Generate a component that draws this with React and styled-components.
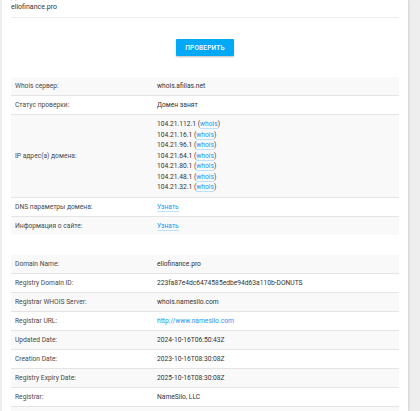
import React from "react";
import styled, { createGlobalStyle } from "styled-components";

const GlobalStyle = createGlobalStyle`
  html, body {
    margin: 0;
    padding: 0;
    background: #eeeeee;
    font-family: Roboto, "Noto Sans", Arial, sans-serif;
    overflow: hidden;
  }
`;

const Page = styled.div`
  width: 420px;
  height: 411px;
  display: flex;
  padding-left: 2px;
  box-sizing: border-box;
`;

const Card = styled.main`
  width: 406px;
  background: #fff;
  padding: 0 9px;
  box-sizing: border-box;
  box-shadow: 1px 0 2px rgba(0, 0, 0, 0.12);
`;

const FieldLabel = styled.div`
  font-size: 7px;
  line-height: 9px;
  color: #9e9e9e;
  margin-top: -7px;
`;

const DomainField = styled.div`
  font-size: 7px;
  line-height: 9px;
  color: #333;
  padding: 1px 0 5px;
  border-bottom: 1px solid #ececec;
`;

const ButtonRow = styled.div`
  display: flex;
  justify-content: center;
  padding: 21px 0 21px;
`;

const CheckButton = styled.button`
  width: 58px;
  height: 17px;
  border: 0;
  border-radius: 1px;
  background: #03a9f4;
  color: #fff;
  font-family: Roboto, Arial, sans-serif;
  font-size: 6.5px;
  font-weight: 500;
  letter-spacing: 0.2px;
  text-transform: uppercase;
  box-shadow: 0 1px 2px rgba(0, 0, 0, 0.25);
  padding: 0;
`;

const Table = styled.table`
  width: 100%;
  border-collapse: collapse;
  font-size: 6.7px;
  line-height: ${(p) => p.lh || 10.5}px;
  color: #333;
  margin-bottom: ${(p) => p.mb || 0}px;
`;

const Row = styled.tr`
  background: ${(p) => (p.striped ? "#f9f9f9" : "#fff")};
  border-top: 1px solid #e4e4e4;
  &:first-child {
    border-top: 0;
  }
`;

const LabelCell = styled.td`
  width: 138px;
  padding: 4px 0 4px 4px;
  color: #4a4a4a;
  vertical-align: middle;
`;

const ValueCell = styled.td`
  padding: 4px 4px;
  vertical-align: middle;
`;

const IpLine = styled.div`
  line-height: 10.5px;
`;

const Link = styled.a`
  color: #2196f3;
  text-decoration: none;
  border-bottom: ${(p) => (p.plain ? "0" : "1px solid #bde0fb")};
`;

const ips = [
  "104.21.112.1",
  "104.21.16.1",
  "104.21.96.1",
  "104.21.64.1",
  "104.21.80.1",
  "104.21.48.1",
  "104.21.32.1",
];

const whois = [
  ["Domain Name:", "eliofinance.pro"],
  ["Registry Domain ID:", "223fa87e4dc6474585edbe94d63a110b-DONUTS"],
  ["Registrar WHOIS Server:", "whois.namesilo.com"],
  ["Registrar URL:", "http://www.namesilo.com", true],
  ["Updated Date:", "2024-10-16T06:50:43Z"],
  ["Creation Date:", "2023-10-16T08:30:08Z"],
  ["Registry Expiry Date:", "2025-10-16T08:30:08Z"],
  ["Registrar:", "NameSilo, LLC"],
  ["Registrar IANA ID:", "1479"],
];

export default function App() {
  return (
    <>
      <GlobalStyle />
      <Page>
        <Card>
          <FieldLabel>Домен</FieldLabel>
          <DomainField>eliofinance.pro</DomainField>
          <ButtonRow>
            <CheckButton>Проверить</CheckButton>
          </ButtonRow>

          <Table lh={10} mb={20}>
            <tbody>
              <Row striped>
                <LabelCell>Whois сервер:</LabelCell>
                <ValueCell>whois.afilias.net</ValueCell>
              </Row>
              <Row>
                <LabelCell>Статус проверки:</LabelCell>
                <ValueCell>Домен занят</ValueCell>
              </Row>
              <Row striped>
                <LabelCell>IP адрес(а) домена:</LabelCell>
                <ValueCell>
                  {ips.map((ip) => (
                    <IpLine key={ip}>
                      {ip} (<Link href="#">whois</Link>)
                    </IpLine>
                  ))}
                </ValueCell>
              </Row>
              <Row>
                <LabelCell>DNS параметры домена:</LabelCell>
                <ValueCell>
                  <Link href="#">Узнать</Link>
                </ValueCell>
              </Row>
              <Row striped>
                <LabelCell>Информация о сайте:</LabelCell>
                <ValueCell>
                  <Link href="#">Узнать</Link>
                </ValueCell>
              </Row>
            </tbody>
          </Table>

          <Table lh={10}>
            <tbody>
              {whois.map(([label, value, isLink], i) => (
                <Row key={label} striped={i % 2 === 0}>
                  <LabelCell>{label}</LabelCell>
                  <ValueCell>
                    {isLink ? (
                      <Link href="#" plain>
                        {value}
                      </Link>
                    ) : (
                      value
                    )}
                  </ValueCell>
                </Row>
              ))}
            </tbody>
          </Table>
        </Card>
      </Page>
    </>
  );
}
